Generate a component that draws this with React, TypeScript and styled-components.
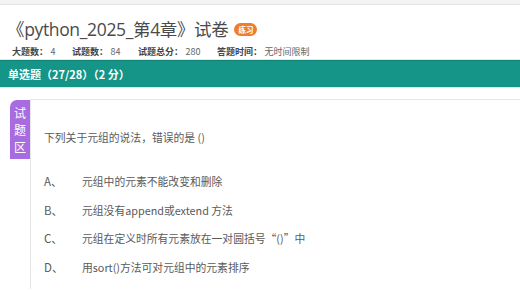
import React from "react";
import styled, { createGlobalStyle } from "styled-components";

const Global = createGlobalStyle`
  html, body { margin: 0; padding: 0; background: #fff; }
  body { font-family: "Noto Sans CJK SC", sans-serif; color: #333; }
`;

const Page = styled.div`
  width: 520px;
  height: 292px;
  overflow: hidden;
  background: #fff;
`;

const TopStrip = styled.div`
  height: 4px;
  background: #f3f3f3;
  border-bottom: 1px solid #e2e2e2;
`;

const Header = styled.div`
  padding: 10px 0 0 7px;
  height: 55px;
  box-sizing: border-box;
  border-bottom: 1px solid #d6f0ee;
`;

const TitleRow = styled.div`
  display: flex;
  align-items: center;
  gap: 6px;
  height: 26px;
`;

const Title = styled.h1`
  margin: 0;
  font-size: 17.5px;
  font-weight: 400;
  color: #4a4a4a;
  letter-spacing: -0.35px;
  font-family: "Open Sans", "Noto Sans CJK SC", sans-serif;
`;

const Badge = styled.span`
  background: #f07d2c;
  color: #fff;
  font-size: 7.5px;
  font-weight: 700;
  border-radius: 7px;
  padding: 1px 4px;
  line-height: 11px;
  margin-top: 3px;
  font-family: "Noto Sans CJK SC", sans-serif;
`;

const Stats = styled.div`
  display: flex;
  align-items: center;
  height: 16px;
  margin-top: 2px;
  padding-left: 5px;
  font-size: 9px;
  color: #555;
  white-space: nowrap;
  font-family: "Noto Sans CJK SC", sans-serif;
`;

const Stat = styled.span<{ $w: number }>`
  width: ${(p) => p.$w}px;
  flex: none;
  b { font-weight: 700; color: #444; }
  span { margin-left: 2.5px; color: #666; }
`;

const SectionBar = styled.div`
  height: 26px;
  background: #149587;
  border-top: 1px solid #0f8275;
  border-bottom: 1px solid #c9ede9;
  display: flex;
  align-items: center;
  padding-left: 8px;
  color: #fff;
  font-size: 11px;
  font-weight: 700;
  font-family: "Noto Sans CJK SC", sans-serif;
`;

const Body = styled.div`
  padding: 11px 0 0 10px;
  display: flex;
`;

const Tab = styled.div`
  width: 20px;
  height: 59px;
  margin-top: 1px;
  background: #a86ce0;
  border-radius: 7px 0 0 0;
  color: #fff;
  font-size: 12px;
  line-height: 17px;
  display: flex;
  flex-direction: column;
  align-items: center;
  justify-content: center;
  flex: none;
  font-family: "Noto Sans CJK SC", sans-serif;
`;

const Card = styled.div`
  flex: 1;
  height: 190px;
  border-top: 1px solid #e6e6e6;
  border-left: 1px solid #e6e6e6;
  padding: 28px 0 0 13px;
  box-sizing: border-box;
  font-family: "Noto Sans CJK SC", sans-serif;
  color: #5a5a5a;
  font-size: 10.8px;
`;

const Question = styled.div`
  height: 18px;
  line-height: 18px;
  margin-bottom: 26px;
`;

const Option = styled.div`
  display: flex;
  height: 18px;
  line-height: 18px;
  margin-bottom: 10.5px;
`;

const Label = styled.span`
  width: 38px;
  flex: none;
  font-size: 11.5px;
`;

const Text = styled.span``;

const options = [
  ["A、", "元组中的元素不能改变和删除"],
  ["B、", "元组没有append或extend 方法"],
  ["C、", "元组在定义时所有元素放在一对圆括号“()”中"],
  ["D、", "用sort()方法可对元组中的元素排序"],
];

export default function App() {
  return (
    <Page>
      <Global />
      <TopStrip />
      <Header>
        <TitleRow>
          <Title>《python_2025_第4章》试卷</Title>
          <Badge>练习</Badge>
        </TitleRow>
        <Stats>
          <Stat $w={60}><b>大题数：</b><span>4</span></Stat>
          <Stat $w={66}><b>试题数：</b><span>84</span></Stat>
          <Stat $w={79}><b>试题总分：</b><span>280</span></Stat>
          <Stat $w={120}><b>答题时间：</b><span>无时间限制</span></Stat>
        </Stats>
      </Header>
      <SectionBar>单选题（27/28）（2 分）</SectionBar>
      <Body>
        <Tab>
          <span>试</span>
          <span>题</span>
          <span>区</span>
        </Tab>
        <Card>
          <Question>下列关于元组的说法，错误的是 ()</Question>
          {options.map(([l, t]) => (
            <Option key={l}>
              <Label>{l}</Label>
              <Text>{t}</Text>
            </Option>
          ))}
        </Card>
      </Body>
    </Page>
  );
}
